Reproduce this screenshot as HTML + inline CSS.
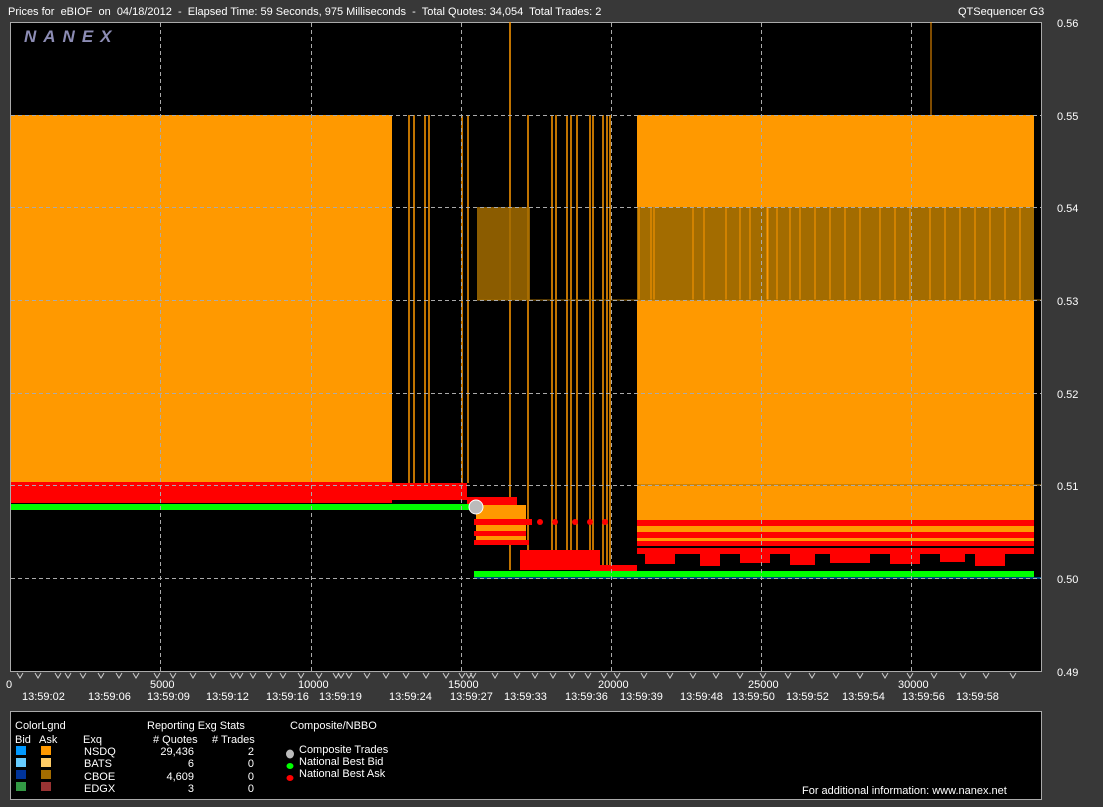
<!DOCTYPE html>
<html><head><meta charset="utf-8"><style>
body{margin:0;background:#383838;width:1103px;height:807px;overflow:hidden}
svg{display:block}
text{font-family:"Liberation Sans",sans-serif;font-size:11px;fill:#fff;white-space:pre}
</style></head><body>
<svg width="1103" height="807" viewBox="0 0 1103 807">
<rect width="1103" height="807" fill="#383838"/>
<text x="8" y="15" xml:space="preserve">Prices for  eBIOF  on  04/18/2012  -  Elapsed Time: 59 Seconds, 975 Milliseconds  -  Total Quotes: 34,054  Total Trades: 2</text>
<text x="958" y="15">QTSequencer G3</text>
<rect x="10.5" y="22.5" width="1031" height="649" fill="#000" stroke="#aaa"/>
<text x="24" y="42" style="font-size:17px;font-weight:bold;font-style:italic;fill:#8c8cb4;letter-spacing:7px">NANEX</text>
<rect x="11" y="115" width="381" height="368" fill="#ff9900"/>
<rect x="11" y="482" width="381" height="21" fill="#ff0000"/>
<rect x="637" y="115" width="397" height="430" fill="#ff9900"/>
<rect x="637" y="207" width="397" height="93" fill="#a36c00"/>
<g stroke="#ff9900" stroke-width="1">
<line x1="639" y1="207" x2="639" y2="300"/><line x1="651" y1="207" x2="651" y2="300"/><line x1="654" y1="207" x2="654" y2="300"/><line x1="693" y1="207" x2="693" y2="300"/><line x1="704" y1="207" x2="704" y2="300"/><line x1="726" y1="207" x2="726" y2="300"/><line x1="740" y1="207" x2="740" y2="300"/><line x1="750" y1="207" x2="750" y2="300"/><line x1="767" y1="207" x2="767" y2="300"/><line x1="777" y1="207" x2="777" y2="300"/><line x1="768" y1="207" x2="768" y2="300"/><line x1="790" y1="207" x2="790" y2="300"/><line x1="800" y1="207" x2="800" y2="300"/><line x1="815" y1="207" x2="815" y2="300"/><line x1="830" y1="207" x2="830" y2="300"/><line x1="845" y1="207" x2="845" y2="300"/><line x1="860" y1="207" x2="860" y2="300"/><line x1="880" y1="207" x2="880" y2="300"/><line x1="895" y1="207" x2="895" y2="300"/><line x1="910" y1="207" x2="910" y2="300"/><line x1="930" y1="207" x2="930" y2="300"/><line x1="945" y1="207" x2="945" y2="300"/><line x1="960" y1="207" x2="960" y2="300"/><line x1="975" y1="207" x2="975" y2="300"/><line x1="990" y1="207" x2="990" y2="300"/><line x1="1005" y1="207" x2="1005" y2="300"/><line x1="1020" y1="207" x2="1020" y2="300"/>
</g>
<line x1="931" y1="22" x2="931" y2="207" stroke="#ff9900"/>
<g stroke="#ff9900" stroke-width="1.5">
<line x1="409" y1="115" x2="409" y2="483"/><line x1="414" y1="115" x2="414" y2="483"/><line x1="425" y1="115" x2="425" y2="483"/><line x1="429" y1="115" x2="429" y2="483"/><line x1="462" y1="115" x2="462" y2="483"/><line x1="468" y1="115" x2="468" y2="483"/><line x1="510" y1="22" x2="510" y2="570"/><line x1="528" y1="115" x2="528" y2="570"/><line x1="552" y1="115" x2="552" y2="570"/><line x1="556" y1="115" x2="556" y2="570"/><line x1="567" y1="115" x2="567" y2="570"/><line x1="571" y1="115" x2="571" y2="570"/><line x1="577" y1="115" x2="577" y2="570"/><line x1="590" y1="115" x2="590" y2="570"/><line x1="593" y1="115" x2="593" y2="570"/><line x1="603" y1="115" x2="603" y2="570"/><line x1="607" y1="115" x2="607" y2="570"/><line x1="610" y1="115" x2="610" y2="570"/>
</g>
<rect x="477" y="207" width="53" height="93" fill="#a36c00" opacity="0.85"/>
<line x1="477" y1="300" x2="1041" y2="300" stroke="#a36c00"/>
<line x1="637" y1="485" x2="1041" y2="485" stroke="#a36c00"/>
<rect x="392" y="483" width="75" height="17" fill="#ff0000"/>
<rect x="467" y="497" width="50" height="12" fill="#ff0000"/>
<rect x="476" y="505" width="50" height="40" fill="#ff9900"/>
<rect x="474" y="519" width="58" height="6" fill="#ff0000"/>
<rect x="474" y="531" width="52" height="5" fill="#ff0000"/>
<rect x="474" y="540" width="55" height="5" fill="#ff0000"/>
<rect x="520" y="550" width="80" height="20" fill="#ff0000"/>
<rect x="590" y="565" width="47" height="7" fill="#ff0000"/>
<g fill="#ff0000"><circle cx="540" cy="522" r="3"/><circle cx="555" cy="522" r="3"/><circle cx="575" cy="522" r="3"/><circle cx="590" cy="522" r="3"/><circle cx="605" cy="522" r="3"/></g>
<rect x="637" y="520" width="397" height="6" fill="#ff0000"/>
<rect x="637" y="532" width="397" height="6" fill="#ff0000"/>
<rect x="637" y="541" width="397" height="5" fill="#ff0000"/>
<rect x="637" y="548" width="397" height="6" fill="#ff0000"/>
<g fill="#ff0000"><rect x="645" y="554" width="30" height="10"/><rect x="700" y="554" width="20" height="12"/><rect x="740" y="554" width="30" height="9"/><rect x="790" y="554" width="25" height="11"/><rect x="830" y="554" width="40" height="9"/><rect x="890" y="554" width="30" height="10"/><rect x="940" y="554" width="25" height="8"/><rect x="975" y="554" width="30" height="12"/></g>
<rect x="11" y="504" width="464" height="6" fill="#00ff00"/>
<rect x="474" y="571" width="560" height="6" fill="#00ff00"/>
<line x1="474" y1="578" x2="1041" y2="578" stroke="#0099ff"/>
<circle cx="476" cy="507" r="7" fill="#bbb" stroke="#fff"/>
<g stroke="#aaa" stroke-dasharray="4,3" stroke-width="1">
<line x1="11" y1="115.5" x2="1041" y2="115.5"/><line x1="11" y1="207.5" x2="1041" y2="207.5"/><line x1="11" y1="300.5" x2="1041" y2="300.5"/><line x1="11" y1="393.5" x2="1041" y2="393.5"/><line x1="11" y1="485.5" x2="1041" y2="485.5"/><line x1="11" y1="578.5" x2="1041" y2="578.5"/>
<line x1="160.5" y1="23" x2="160.5" y2="671"/><line x1="311.5" y1="23" x2="311.5" y2="671"/><line x1="461.5" y1="23" x2="461.5" y2="671"/><line x1="611.5" y1="23" x2="611.5" y2="671"/><line x1="761.5" y1="23" x2="761.5" y2="671"/><line x1="911.5" y1="23" x2="911.5" y2="671"/>
</g>
<g><text x="1057" y="27">0.56</text><text x="1057" y="120">0.55</text><text x="1057" y="212">0.54</text><text x="1057" y="305">0.53</text><text x="1057" y="398">0.52</text><text x="1057" y="490">0.51</text><text x="1057" y="583">0.50</text><text x="1057" y="676">0.49</text></g>
<g fill="none" stroke="#ccc" stroke-width="1">
<path d="M17 673l3 5 3-5M35 673l3 5 3-5M55 673l3 5 3-5M65 673l3 5 3-5M80 673l3 5 3-5M98 673l3 5 3-5M116 673l3 5 3-5M133 673l3 5 3-5M154 673l3 5 3-5M170 673l3 5 3-5M190 673l3 5 3-5M210 673l3 5 3-5M230 673l3 5 3-5M237 673l3 5 3-5M250 673l3 5 3-5M266 673l3 5 3-5M280 673l3 5 3-5M298 673l3 5 3-5M316 673l3 5 3-5M333 673l3 5 3-5M338 673l3 5 3-5M346 673l3 5 3-5M364 673l3 5 3-5M383 673l3 5 3-5M403 673l3 5 3-5M423 673l3 5 3-5M443 673l3 5 3-5M459 673l3 5 3-5M466 673l3 5 3-5M470 673l3 5 3-5M492 673l3 5 3-5M514 673l3 5 3-5M532 673l3 5 3-5M550 673l3 5 3-5M569 673l3 5 3-5M585 673l3 5 3-5M601 673l3 5 3-5M614 673l3 5 3-5M641 673l3 5 3-5M667 673l3 5 3-5M690 673l3 5 3-5M713 673l3 5 3-5M737 673l3 5 3-5M760 673l3 5 3-5M785 673l3 5 3-5M809 673l3 5 3-5M833 673l3 5 3-5M857 673l3 5 3-5M882 673l3 5 3-5M907 673l3 5 3-5M931 673l3 5 3-5M960 673l3 5 3-5M983 673l3 5 3-5M1010 673l3 5 3-5"/>
</g>
<g style="font-size:10px">
<text x="6" y="688">0</text><text x="150" y="688">5000</text><text x="298" y="688">10000</text><text x="448" y="688">15000</text><text x="598" y="688">20000</text><text x="748" y="688">25000</text><text x="898" y="688">30000</text>
<text x="22" y="700">13:59:02</text><text x="88" y="700">13:59:06</text><text x="147" y="700">13:59:09</text><text x="206" y="700">13:59:12</text><text x="266" y="700">13:59:16</text><text x="319" y="700">13:59:19</text><text x="389" y="700">13:59:24</text><text x="450" y="700">13:59:27</text><text x="504" y="700">13:59:33</text><text x="565" y="700">13:59:36</text><text x="620" y="700">13:59:39</text><text x="680" y="700">13:59:48</text><text x="732" y="700">13:59:50</text><text x="786" y="700">13:59:52</text><text x="842" y="700">13:59:54</text><text x="902" y="700">13:59:56</text><text x="956" y="700">13:59:58</text>
</g>
<rect x="10.5" y="711.5" width="1031" height="88" fill="#000" stroke="#aaa"/>
<text x="15" y="729">ColorLgnd</text><text x="15" y="743">Bid</text><text x="39" y="743">Ask</text>
<text x="83" y="743">Exq</text>
<text x="147" y="729">Reporting Exg Stats</text>
<text x="153" y="743"># Quotes</text><text x="212" y="743"># Trades</text>
<text x="290" y="729">Composite/NBBO</text>
<rect x="16" y="746" width="10" height="9" fill="#0099ff"/><rect x="41" y="746" width="10" height="9" fill="#ff9900"/>
<rect x="16" y="758" width="10" height="9" fill="#66ccff"/><rect x="41" y="758" width="10" height="9" fill="#ffcc66"/>
<rect x="16" y="770" width="10" height="9" fill="#003399"/><rect x="41" y="770" width="10" height="9" fill="#a36c00"/>
<rect x="16" y="782" width="10" height="9" fill="#339944"/><rect x="41" y="782" width="10" height="9" fill="#993333"/>
<text x="84" y="755">NSDQ</text><text x="84" y="767">BATS</text><text x="84" y="780">CBOE</text><text x="84" y="792">EDGX</text>
<g text-anchor="end"><text x="194" y="755">29,436</text><text x="194" y="767">6</text><text x="194" y="780">4,609</text><text x="194" y="792">3</text>
<text x="254" y="755">2</text><text x="254" y="767">0</text><text x="254" y="780">0</text><text x="254" y="792">0</text></g>
<ellipse cx="290" cy="754" rx="4" ry="4.5" fill="#bbb"/><ellipse cx="290" cy="766" rx="3.5" ry="3" fill="#00ff00"/><ellipse cx="290" cy="778" rx="3.5" ry="3" fill="#ff0000"/>
<text x="299" y="753">Composite Trades</text><text x="299" y="765">National Best Bid</text><text x="299" y="777">National Best Ask</text>
<text x="802" y="794">For additional information: www.nanex.net</text>
</svg>
</body></html>
